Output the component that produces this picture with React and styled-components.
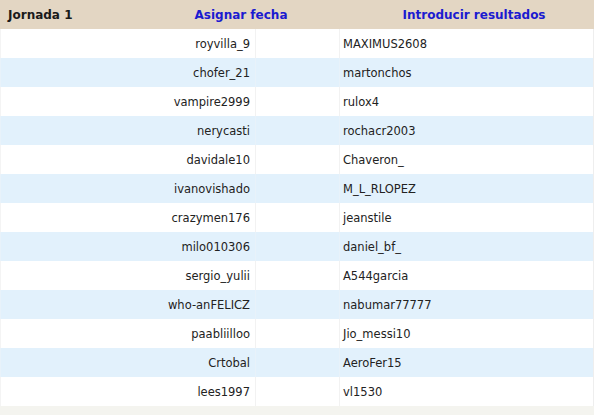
import React from "react";
import styled, { createGlobalStyle } from "styled-components";

const Global = createGlobalStyle`
  html, body { margin: 0; padding: 0; background: #f4f4ef; }
  body { font-family: "DejaVu Sans", Verdana, sans-serif; }
`;

const Wrap = styled.div`
  width: 594px;
  height: 415px;
  background: #f4f4ef;
  overflow: hidden;
`;

const Header = styled.div`
  display: grid;
  grid-template-columns: 128px 226px 1fr;
  height: 29px;
  align-items: center;
  background: #e3d6c3;
  font-size: 12px;
  font-weight: bold;
`;

const HeadCell = styled.div`
  padding-left: ${(p) => (p.$left ? "8px" : "0")};
  text-align: ${(p) => (p.$left ? "left" : "center")};
  color: ${(p) => (p.$link ? "#1b1bd0" : "#1a1a1a")};
`;

const Row = styled.div`
  display: grid;
  grid-template-columns: 255px 84px 1fr;
  height: 29px;
  background: ${(p) => (p.$alt ? "#e2f1fc" : "#ffffff")};
  font-size: 11.5px;
  color: #222;
`;

const Cell = styled.div`
  display: flex;
  align-items: center;
  justify-content: ${(p) => (p.$right ? "flex-end" : "flex-start")};
  padding: ${(p) => (p.$right ? "0 5px 0 0" : "0 0 0 3px")};
  border-left: 1px solid ${(p) => (p.$alt ? "#e8f2fa" : "#f2f2f2")};
  &:first-child { border-left-color: ${(p) => (p.$alt ? "#e8f2fa" : "#f4f4f4")}; }
  &:last-child { border-right: 1px solid #eeeeee; }
`;

const matches = [
  ["royvilla_9", "MAXIMUS2608"],
  ["chofer_21", "martonchos"],
  ["vampire2999", "rulox4"],
  ["nerycasti", "rochacr2003"],
  ["davidale10", "Chaveron_"],
  ["ivanovishado", "M_L_RLOPEZ"],
  ["crazymen176", "jeanstile"],
  ["milo010306", "daniel_bf_"],
  ["sergio_yulii", "A544garcia"],
  ["who-anFELICZ", "nabumar77777"],
  ["paabliilloo", "Jio_messi10"],
  ["Crtobal", "AeroFer15"],
  ["lees1997", "vl1530"],
];

export default function App() {
  return (
    <>
      <Global />
      <Wrap>
        <Header>
          <HeadCell $left>Jornada 1</HeadCell>
          <HeadCell $link>Asignar fecha</HeadCell>
          <HeadCell $link>Introducir resultados</HeadCell>
        </Header>
        {matches.map(([a, b], i) => (
          <Row key={i} $alt={i % 2 === 1}>
            <Cell $right $alt={i % 2 === 1}>{a}</Cell>
            <Cell $alt={i % 2 === 1} />
            <Cell $alt={i % 2 === 1}>{b}</Cell>
          </Row>
        ))}
      </Wrap>
    </>
  );
}
